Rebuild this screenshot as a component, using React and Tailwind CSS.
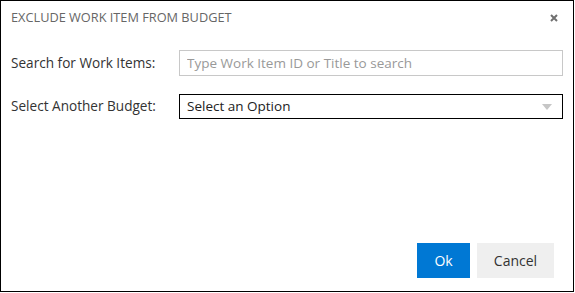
import React from 'react';

export default function App() {
  return (
    <div className="w-[575px] h-[293px] bg-white" style={{ fontFamily: '"Open Sans", "Noto Sans", sans-serif' }}>
      <div className="w-[574px] h-[292px] border border-black flex flex-col">
        {/* header */}
        <div className="flex items-center justify-between pl-[10px] pr-[15px] pt-[8px] h-[26px]">
          <h1 className="text-[12.75px] text-[#666]">EXCLUDE WORK ITEM FROM BUDGET</h1>
          <svg width="8" height="8" viewBox="0 0 8 8">
            <path d="M1 1L7 7M7 1L1 7" stroke="#707070" strokeWidth="2" />
          </svg>
        </div>

        {/* form */}
        <div className="flex flex-col gap-[18px] pl-[10px] pr-[10px] pt-[23px] text-[13.6px] text-[#333]">
          <div className="flex items-center">
            <label className="w-[168px]">Search for Work Items:</label>
            <input
              className="flex-1 h-[26px] border border-[#c8c8c8] px-[7px] text-[13.5px] outline-none placeholder:text-[#999]"
              placeholder="Type Work Item ID or Title to search"
            />
          </div>
          <div className="flex items-center">
            <label className="w-[168px]">Select Another Budget:</label>
            <div className="flex-1 h-[25px] border border-black flex items-center justify-between pl-[7px] pr-[10px] text-[#222] text-[13.5px]">
              <span>Select an Option</span>
              <svg width="10" height="6" viewBox="0 0 10 6"><path d="M0 0h10L5 6z" fill="#c6c6c6" /></svg>
            </div>
          </div>
        </div>

        {/* footer */}
        <div className="mt-auto flex justify-end gap-[7px] pr-[19px] pb-[13px]">
          <button className="w-[53px] h-[35px] bg-[#0078d4] text-white text-[14px]">Ok</button>
          <button className="w-[77px] h-[35px] bg-[#efefef] text-[#333] text-[14px]">Cancel</button>
        </div>
      </div>
    </div>
  );
}
